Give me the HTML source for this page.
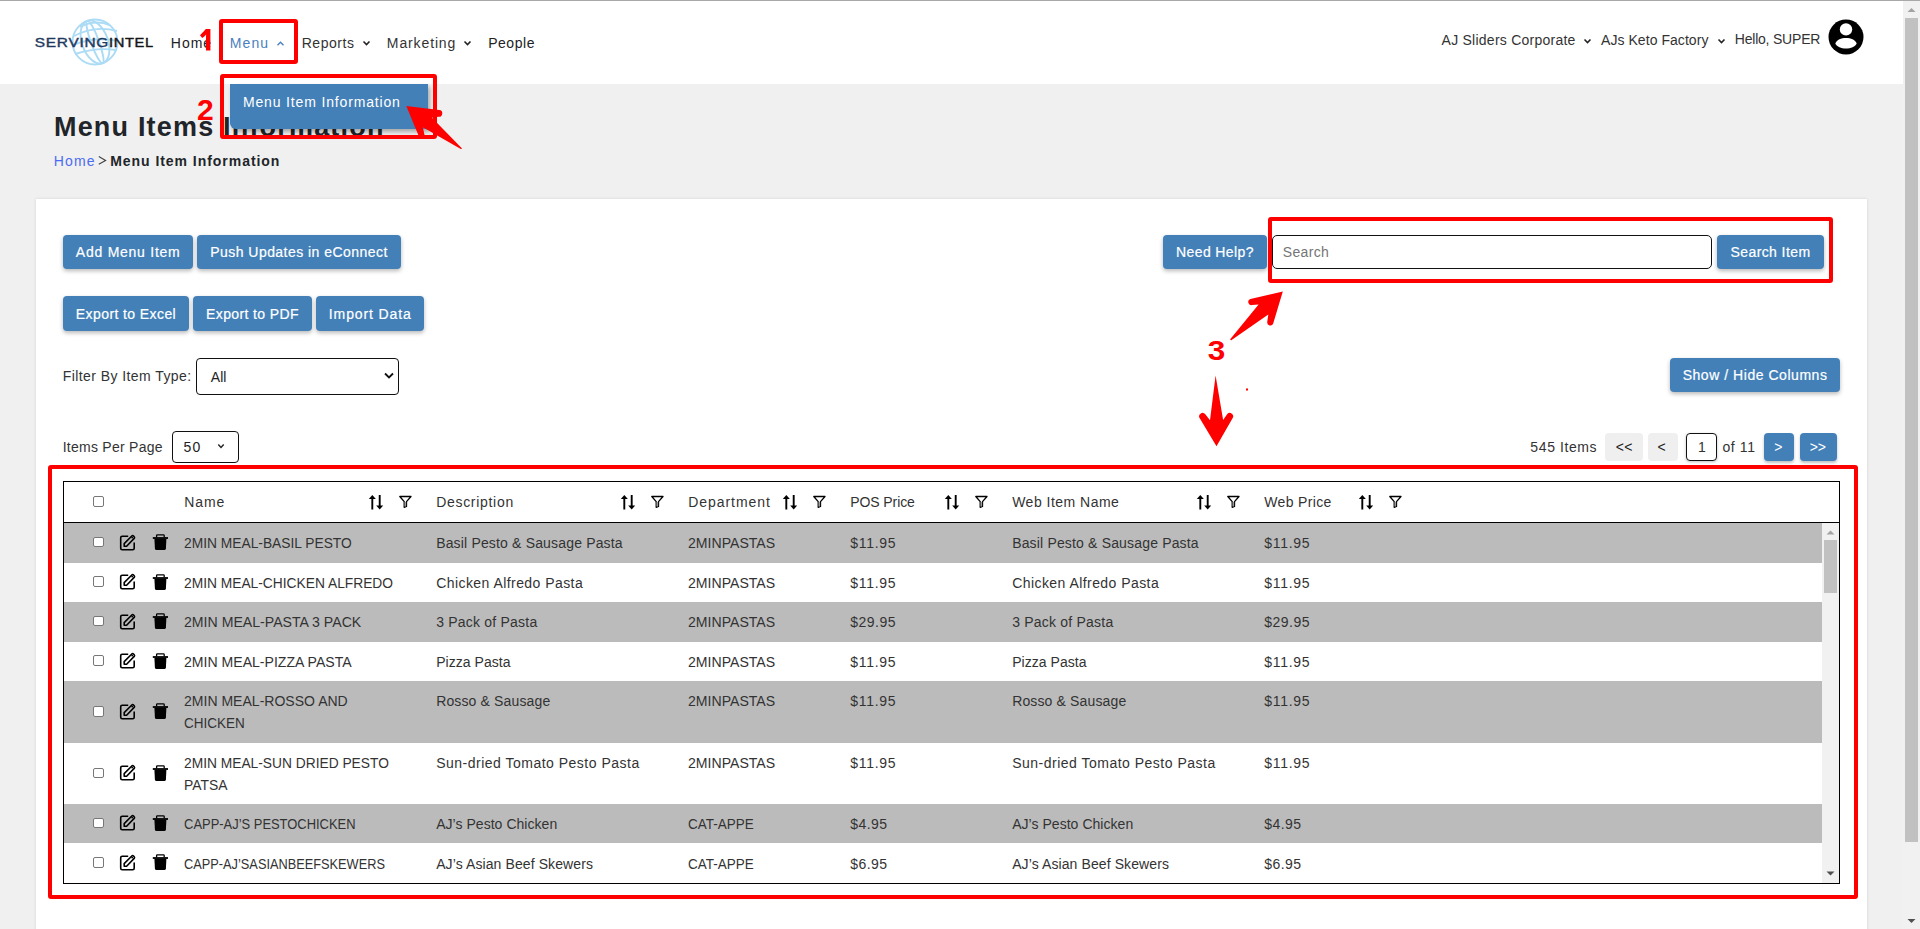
<!DOCTYPE html>
<html><head><meta charset="utf-8"><title>Menu Items Information</title>
<style>
html,body{margin:0;padding:0;width:1920px;height:929px;overflow:hidden;background:#f0f0f0;font-family:"Liberation Sans",sans-serif;}
.t{position:absolute;white-space:pre;font-family:"Liberation Sans",sans-serif;}
</style></head><body>
<div style="position:absolute;left:0px;top:1px;width:1903px;height:83px;background:#fff"></div>
<div style="position:absolute;left:0px;top:0px;width:1920px;height:1px;background:#a8a8a8"></div>
<div style="position:absolute;left:1903px;top:1px;width:17px;height:928px;background:#f1f1f1"></div>
<div style="position:absolute;left:1905px;top:18px;width:13px;height:824px;background:#c1c1c1"></div>
<svg style="position:absolute;left:1903px;top:1px" width="17" height="17"><path d="M4.5 11 L8.5 7 L12.5 11 Z" fill="#a3a3a3"/></svg>
<svg style="position:absolute;left:1903px;top:912px" width="17" height="17"><path d="M4.5 7 L8.5 11 L12.5 7 Z" fill="#505050"/></svg>
<svg style="position:absolute;left:70px;top:17px" width="50" height="50" viewBox="0 0 50 50">
<g fill="none" stroke="#acdbf5" stroke-width="1.9">
<circle cx="25" cy="25" r="22.5"/>
<ellipse cx="25" cy="25" rx="13" ry="22.5" transform="rotate(-20 25 25)"/>
<ellipse cx="25" cy="25" rx="4" ry="22.5" transform="rotate(-20 25 25)"/>
<path d="M4 19 Q25 8 47 14"/>
<path d="M3 28 Q25 19 48 24"/>
<path d="M5 37 Q27 30 46 33"/>
<path d="M10 10 Q25 2 40 8"/>
</g></svg>
<div class="t" style="left:35.22px;top:36.30px;font-size:13px;line-height:13px;font-weight:400;color:#1f3a60;letter-spacing:0.600px;-webkit-text-stroke:0.4px #1f3a60;transform:scaleX(1.1859);transform-origin:0.78px 0">SERVING</div>
<div class="t" style="left:109.22px;top:36.30px;font-size:13px;line-height:13px;font-weight:400;color:#151515;letter-spacing:0.600px;-webkit-text-stroke:0.4px #151515;transform:scaleX(1.1294);transform-origin:0.78px 0">INTEL</div>
<div class="t" style="left:170.86px;top:36.15px;font-size:14px;line-height:14px;font-weight:400;color:#222;letter-spacing:0.967px;">Home</div>
<div class="t" style="left:229.86px;top:36.15px;font-size:14px;line-height:14px;font-weight:400;color:#4a80c0;letter-spacing:1.076px;">Menu</div>
<svg style="position:absolute;left:276px;top:40px" width="9" height="7"><path d="M1.5 5.2 L4.5 2.2 L7.5 5.2" fill="none" stroke="#4a80c0" stroke-width="1.4"/></svg>
<div class="t" style="left:301.66px;top:36.15px;font-size:14px;line-height:14px;font-weight:400;color:#333;letter-spacing:0.555px;">Reports</div>
<svg style="position:absolute;left:362px;top:39px" width="9" height="8"><path d="M1.5 2.5 L4.5 5.5 L7.5 2.5" fill="none" stroke="#222" stroke-width="1.6"/></svg>
<div class="t" style="left:386.86px;top:36.15px;font-size:14px;line-height:14px;font-weight:400;color:#333;letter-spacing:0.874px;">Marketing</div>
<svg style="position:absolute;left:463px;top:39px" width="9" height="8"><path d="M1.5 2.5 L4.5 5.5 L7.5 2.5" fill="none" stroke="#222" stroke-width="1.6"/></svg>
<div class="t" style="left:488.16px;top:36.15px;font-size:14px;line-height:14px;font-weight:400;color:#222;letter-spacing:0.533px;">People</div>
<div class="t" style="left:1441.56px;top:33.15px;font-size:14px;line-height:14px;font-weight:400;color:#333;letter-spacing:0.247px;">AJ Sliders Corporate</div>
<svg style="position:absolute;left:1583px;top:37px" width="9" height="8"><path d="M1.5 2.5 L4.5 5.5 L7.5 2.5" fill="none" stroke="#222" stroke-width="1.6"/></svg>
<div class="t" style="left:1601.06px;top:33.15px;font-size:14px;line-height:14px;font-weight:400;color:#333;letter-spacing:0.051px;">AJs Keto Factory</div>
<svg style="position:absolute;left:1717px;top:37px" width="9" height="8"><path d="M1.5 2.5 L4.5 5.5 L7.5 2.5" fill="none" stroke="#222" stroke-width="1.6"/></svg>
<div class="t" style="left:1734.76px;top:31.90px;font-size:14px;line-height:14px;font-weight:400;color:#333;letter-spacing:-0.206px;">Hello, SUPER</div>
<svg style="position:absolute;left:1828px;top:19px" width="36" height="36" viewBox="0 0 36 36">
<circle cx="18" cy="18" r="17.5" fill="#000"/>
<circle cx="18" cy="10.4" r="6.2" fill="#fff"/>
<path d="M7.3 24.5 C9 20.5 13 19 18 19 C23 19 27 20.5 28.7 24.5 C27 28 23 29.5 18 29.5 C13 29.5 9 28 7.3 24.5Z" fill="#fff"/>
</svg>
<div class="t" style="left:53.98px;top:113.94px;font-size:27px;line-height:27px;font-weight:700;color:#212529;letter-spacing:1.186px;">Menu Items Information</div>
<div class="t" style="left:53.76px;top:153.85px;font-size:14px;line-height:14px;font-weight:400;color:#4b6cf0;letter-spacing:1.167px;">Home</div>
<svg style="position:absolute;left:0;top:0" width="120" height="180"><path d="M98.8 156.6 L105.6 160.4 L98.8 164.2" fill="none" stroke="#444" stroke-width="1.15"/></svg>
<div class="t" style="left:110.16px;top:153.85px;font-size:14px;line-height:14px;font-weight:700;color:#212529;letter-spacing:0.957px;">Menu Item Information</div>
<div style="position:absolute;left:36px;top:199px;width:1831px;height:760px;background:#fff;box-shadow:0 0 3px rgba(0,0,0,0.12)"></div>
<div style="position:absolute;left:63px;top:235px;width:130px;height:34px;background:#4380b8;border-radius:4px;box-shadow:0 2px 4px rgba(0,0,0,0.28)"></div>
<div class="t" style="left:75.86px;top:245.35px;font-size:14px;line-height:14px;font-weight:400;color:#fff;letter-spacing:0.744px;-webkit-text-stroke:0.2px #fff">Add Menu Item</div>
<div style="position:absolute;left:197px;top:235px;width:204px;height:34px;background:#4380b8;border-radius:4px;box-shadow:0 2px 4px rgba(0,0,0,0.28)"></div>
<div class="t" style="left:210.21px;top:245.35px;font-size:14px;line-height:14px;font-weight:400;color:#fff;letter-spacing:0.461px;-webkit-text-stroke:0.2px #fff">Push Updates in eConnect</div>
<div style="position:absolute;left:63px;top:296px;width:126px;height:34.5px;background:#4380b8;border-radius:4px;box-shadow:0 2px 4px rgba(0,0,0,0.28)"></div>
<div class="t" style="left:75.86px;top:307.15px;font-size:14px;line-height:14px;font-weight:400;color:#fff;letter-spacing:0.407px;-webkit-text-stroke:0.2px #fff">Export to Excel</div>
<div style="position:absolute;left:193px;top:296px;width:119px;height:34.5px;background:#4380b8;border-radius:4px;box-shadow:0 2px 4px rgba(0,0,0,0.28)"></div>
<div class="t" style="left:206.11px;top:307.15px;font-size:14px;line-height:14px;font-weight:400;color:#fff;letter-spacing:0.370px;-webkit-text-stroke:0.2px #fff">Export to PDF</div>
<div style="position:absolute;left:316px;top:296px;width:108px;height:34.5px;background:#4380b8;border-radius:4px;box-shadow:0 2px 4px rgba(0,0,0,0.28)"></div>
<div class="t" style="left:328.86px;top:307.15px;font-size:14px;line-height:14px;font-weight:400;color:#fff;letter-spacing:0.872px;-webkit-text-stroke:0.2px #fff">Import Data</div>
<div class="t" style="left:62.66px;top:368.85px;font-size:14px;line-height:14px;font-weight:400;color:#333;letter-spacing:0.432px;">Filter By Item Type:</div>
<div style="position:absolute;left:196px;top:358px;width:203px;height:37px;box-sizing:border-box;border:1px solid #111;border-radius:4px;background:#fff"></div>
<div class="t" style="left:210.86px;top:370.15px;font-size:14px;line-height:14px;font-weight:400;color:#222;letter-spacing:0.000px;">All</div>
<svg style="position:absolute;left:383px;top:371px" width="12" height="10"><path d="M2 2.5 L6 6.5 L10 2.5" fill="none" stroke="#111" stroke-width="1.8"/></svg>
<div class="t" style="left:62.66px;top:439.95px;font-size:14px;line-height:14px;font-weight:400;color:#333;letter-spacing:0.258px;">Items Per Page</div>
<div style="position:absolute;left:172px;top:431px;width:67px;height:31.5px;box-sizing:border-box;border:1px solid #111;border-radius:4px;background:#fff"></div>
<div class="t" style="left:183.56px;top:439.95px;font-size:14px;line-height:14px;font-weight:400;color:#222;letter-spacing:1.182px;">50</div>
<svg style="position:absolute;left:217px;top:443px" width="8" height="7"><path d="M1.3 1.5 L4 4.5 L6.7 1.5" fill="none" stroke="#222" stroke-width="1.4"/></svg>
<div style="position:absolute;left:1163px;top:235px;width:104px;height:34px;background:#4380b8;border-radius:4px;box-shadow:0 2px 4px rgba(0,0,0,0.28)"></div>
<div class="t" style="left:1176.06px;top:245.05px;font-size:14px;line-height:14px;font-weight:400;color:#fff;letter-spacing:0.391px;-webkit-text-stroke:0.2px #fff">Need Help?</div>
<div style="position:absolute;left:1272px;top:235px;width:440px;height:34px;box-sizing:border-box;border:1px solid #111;border-radius:5px;background:#fff"></div>
<div class="t" style="left:1282.86px;top:245.05px;font-size:14px;line-height:14px;font-weight:400;color:#757575;letter-spacing:0.300px;">Search</div>
<div style="position:absolute;left:1717px;top:235px;width:107px;height:34px;background:#4380b8;border-radius:4px;box-shadow:0 2px 4px rgba(0,0,0,0.28)"></div>
<div class="t" style="left:1730.51px;top:245.05px;font-size:14px;line-height:14px;font-weight:400;color:#fff;letter-spacing:0.408px;-webkit-text-stroke:0.2px #fff">Search Item</div>
<div style="position:absolute;left:1670px;top:358px;width:170px;height:34px;background:#4380b8;border-radius:4px;box-shadow:0 2px 4px rgba(0,0,0,0.28)"></div>
<div class="t" style="left:1682.66px;top:368.35px;font-size:14px;line-height:14px;font-weight:400;color:#fff;letter-spacing:0.535px;-webkit-text-stroke:0.2px #fff">Show / Hide Columns</div>
<div class="t" style="left:1530.36px;top:440.15px;font-size:14px;line-height:14px;font-weight:400;color:#333;letter-spacing:0.597px;">545 Items</div>
<div style="position:absolute;left:1605px;top:433px;width:38px;height:28px;background:#efefef;border-radius:4px"></div>
<div class="t" style="left:1615.76px;top:440.15px;font-size:14px;line-height:14px;font-weight:400;color:#222;letter-spacing:0.401px;">&lt;&lt;</div>
<div style="position:absolute;left:1648px;top:433px;width:30px;height:28px;background:#efefef;border-radius:4px"></div>
<div class="t" style="left:1657.56px;top:440.15px;font-size:14px;line-height:14px;font-weight:400;color:#222;letter-spacing:0.000px;">&lt;</div>
<div style="position:absolute;left:1686px;top:433px;width:31px;height:28px;box-sizing:border-box;border:1px solid #111;border-radius:4px;background:#fff;box-shadow:0 1px 3px rgba(0,0,0,0.25)"></div>
<div class="t" style="left:1697.96px;top:440.15px;font-size:14px;line-height:14px;font-weight:400;color:#333;letter-spacing:0.000px;">1</div>
<div class="t" style="left:1722.46px;top:440.15px;font-size:14px;line-height:14px;font-weight:400;color:#333;letter-spacing:0.613px;">of 11</div>
<div style="position:absolute;left:1764px;top:433px;width:30px;height:28px;background:#4380b8;border-radius:4px;box-shadow:0 2px 3px rgba(0,0,0,0.25)"></div>
<div class="t" style="left:1774.36px;top:440.15px;font-size:14px;line-height:14px;font-weight:400;color:#fff;letter-spacing:0.000px;">&gt;</div>
<div style="position:absolute;left:1800px;top:433px;width:37px;height:28px;background:#4380b8;border-radius:4px;box-shadow:0 2px 3px rgba(0,0,0,0.25)"></div>
<div class="t" style="left:1809.66px;top:440.15px;font-size:14px;line-height:14px;font-weight:400;color:#fff;letter-spacing:0.001px;">&gt;&gt;</div>
<div style="position:absolute;left:63px;top:481px;width:1777px;height:403px;box-sizing:border-box;border:1px solid #000;background:#fff"></div>
<div style="position:absolute;left:64px;top:522px;width:1776px;height:1px;background:#000"></div>
<div style="position:absolute;left:93px;top:496.3px;width:10.5px;height:10.5px;box-sizing:border-box;border:1px solid #777;border-radius:2px;background:#fff"></div>
<div class="t" style="left:184.16px;top:494.85px;font-size:14px;line-height:14px;font-weight:400;color:#333;letter-spacing:0.967px;">Name</div>
<svg style="position:absolute;left:368px;top:494px" width="16" height="17" viewBox="0 0 16 17"><g stroke="#000" stroke-width="1.9" fill="none"><path d="M4.3 4 V15.5"/><path d="M11.7 1 V12"/></g><path d="M0.8 5 L4.3 1 L7.8 5Z" fill="#000"/><path d="M8.2 11.5 L11.7 15.5 L15.2 11.5Z" fill="#000"/></svg>
<svg style="position:absolute;left:399px;top:495px" width="13" height="13" viewBox="0 0 13 13"><path d="M0.8 1.5 H12 L7.5 6.6 V11.5 L5.2 12.3 V6.6 Z" fill="#fff" stroke="#000" stroke-width="1.3" stroke-linejoin="round"/><path d="M5.6 7 H7.1 V11 L5.6 11.6Z" fill="#999"/></svg>
<div class="t" style="left:436.16px;top:494.85px;font-size:14px;line-height:14px;font-weight:400;color:#333;letter-spacing:0.703px;">Description</div>
<svg style="position:absolute;left:620px;top:494px" width="16" height="17" viewBox="0 0 16 17"><g stroke="#000" stroke-width="1.9" fill="none"><path d="M4.3 4 V15.5"/><path d="M11.7 1 V12"/></g><path d="M0.8 5 L4.3 1 L7.8 5Z" fill="#000"/><path d="M8.2 11.5 L11.7 15.5 L15.2 11.5Z" fill="#000"/></svg>
<svg style="position:absolute;left:651px;top:495px" width="13" height="13" viewBox="0 0 13 13"><path d="M0.8 1.5 H12 L7.5 6.6 V11.5 L5.2 12.3 V6.6 Z" fill="#fff" stroke="#000" stroke-width="1.3" stroke-linejoin="round"/><path d="M5.6 7 H7.1 V11 L5.6 11.6Z" fill="#999"/></svg>
<div class="t" style="left:688.16px;top:494.85px;font-size:14px;line-height:14px;font-weight:400;color:#333;letter-spacing:0.967px;">Department</div>
<svg style="position:absolute;left:782px;top:494px" width="16" height="17" viewBox="0 0 16 17"><g stroke="#000" stroke-width="1.9" fill="none"><path d="M4.3 4 V15.5"/><path d="M11.7 1 V12"/></g><path d="M0.8 5 L4.3 1 L7.8 5Z" fill="#000"/><path d="M8.2 11.5 L11.7 15.5 L15.2 11.5Z" fill="#000"/></svg>
<svg style="position:absolute;left:813px;top:495px" width="13" height="13" viewBox="0 0 13 13"><path d="M0.8 1.5 H12 L7.5 6.6 V11.5 L5.2 12.3 V6.6 Z" fill="#fff" stroke="#000" stroke-width="1.3" stroke-linejoin="round"/><path d="M5.6 7 H7.1 V11 L5.6 11.6Z" fill="#999"/></svg>
<div class="t" style="left:850.16px;top:494.85px;font-size:14px;line-height:14px;font-weight:400;color:#333;letter-spacing:-0.075px;">POS Price</div>
<svg style="position:absolute;left:944px;top:494px" width="16" height="17" viewBox="0 0 16 17"><g stroke="#000" stroke-width="1.9" fill="none"><path d="M4.3 4 V15.5"/><path d="M11.7 1 V12"/></g><path d="M0.8 5 L4.3 1 L7.8 5Z" fill="#000"/><path d="M8.2 11.5 L11.7 15.5 L15.2 11.5Z" fill="#000"/></svg>
<svg style="position:absolute;left:975px;top:495px" width="13" height="13" viewBox="0 0 13 13"><path d="M0.8 1.5 H12 L7.5 6.6 V11.5 L5.2 12.3 V6.6 Z" fill="#fff" stroke="#000" stroke-width="1.3" stroke-linejoin="round"/><path d="M5.6 7 H7.1 V11 L5.6 11.6Z" fill="#999"/></svg>
<div class="t" style="left:1012.16px;top:494.85px;font-size:14px;line-height:14px;font-weight:400;color:#333;letter-spacing:0.489px;">Web Item Name</div>
<svg style="position:absolute;left:1196px;top:494px" width="16" height="17" viewBox="0 0 16 17"><g stroke="#000" stroke-width="1.9" fill="none"><path d="M4.3 4 V15.5"/><path d="M11.7 1 V12"/></g><path d="M0.8 5 L4.3 1 L7.8 5Z" fill="#000"/><path d="M8.2 11.5 L11.7 15.5 L15.2 11.5Z" fill="#000"/></svg>
<svg style="position:absolute;left:1227px;top:495px" width="13" height="13" viewBox="0 0 13 13"><path d="M0.8 1.5 H12 L7.5 6.6 V11.5 L5.2 12.3 V6.6 Z" fill="#fff" stroke="#000" stroke-width="1.3" stroke-linejoin="round"/><path d="M5.6 7 H7.1 V11 L5.6 11.6Z" fill="#999"/></svg>
<div class="t" style="left:1264.16px;top:494.85px;font-size:14px;line-height:14px;font-weight:400;color:#333;letter-spacing:0.366px;">Web Price</div>
<svg style="position:absolute;left:1358px;top:494px" width="16" height="17" viewBox="0 0 16 17"><g stroke="#000" stroke-width="1.9" fill="none"><path d="M4.3 4 V15.5"/><path d="M11.7 1 V12"/></g><path d="M0.8 5 L4.3 1 L7.8 5Z" fill="#000"/><path d="M8.2 11.5 L11.7 15.5 L15.2 11.5Z" fill="#000"/></svg>
<svg style="position:absolute;left:1389px;top:495px" width="13" height="13" viewBox="0 0 13 13"><path d="M0.8 1.5 H12 L7.5 6.6 V11.5 L5.2 12.3 V6.6 Z" fill="#fff" stroke="#000" stroke-width="1.3" stroke-linejoin="round"/><path d="M5.6 7 H7.1 V11 L5.6 11.6Z" fill="#999"/></svg>
<div style="position:absolute;left:64px;top:523px;width:1758px;height:39.5px;background:#bbbbbb"></div>
<div style="position:absolute;left:93px;top:536.75px;width:10.5px;height:10.5px;box-sizing:border-box;border:1px solid #777;border-radius:2px;background:#fff"></div>
<svg style="position:absolute;left:119px;top:533.5px" width="17" height="17" viewBox="0 0 17 17"><path d="M9.2 2.2 H3.2 Q1.7 2.2 1.7 3.7 V14.2 Q1.7 15.7 3.2 15.7 H13.7 Q15.2 15.7 15.2 14.2 V8.4" fill="none" stroke="#000" stroke-width="1.6"/><path d="M5.2 12.3 V9.6 L12.8 2 A1.2 1.2 0 0 1 14.5 2 L15.2 2.7 A1.2 1.2 0 0 1 15.2 4.4 L7.6 12.3 Z" fill="none" stroke="#000" stroke-width="1.6" stroke-linejoin="round"/><circle cx="13.2" cy="3.6" r="0.9" fill="#000"/></svg>
<svg style="position:absolute;left:152px;top:534.0px" width="17" height="18" viewBox="0 0 17 18"><path d="M4.6 3.2 V1.6 Q4.6 0.9 5.4 0.9 H11.4 Q12.2 0.9 12.2 1.6 V3.2" fill="none" stroke="#000" stroke-width="1.3"/><path d="M0.8 3.1 H16 V4.9 H0.8Z" fill="#000"/><path d="M2.4 4.6 H14.4 L13.9 14.5 Q13.8 16 12.3 16 H4.5 Q3 16 2.9 14.5Z" fill="#000"/></svg>
<div class="t" style="left:184.16px;top:536.35px;font-size:14px;line-height:14px;font-weight:400;color:#333;letter-spacing:0.000px;;transform:scaleX(0.9844);transform-origin:0.84px 0">2MIN MEAL-BASIL PESTO</div>
<div class="t" style="left:436.16px;top:536.35px;font-size:14px;line-height:14px;font-weight:400;color:#333;letter-spacing:0.167px;">Basil Pesto &amp; Sausage Pasta</div>
<div class="t" style="left:688.16px;top:536.35px;font-size:14px;line-height:14px;font-weight:400;color:#333;letter-spacing:0.000px;;transform:scaleX(1.0063);transform-origin:0.84px 0">2MINPASTAS</div>
<div class="t" style="left:850.16px;top:536.35px;font-size:14px;line-height:14px;font-weight:400;color:#333;letter-spacing:0.736px;">$11.95</div>
<div class="t" style="left:1012.16px;top:536.35px;font-size:14px;line-height:14px;font-weight:400;color:#333;letter-spacing:0.167px;">Basil Pesto &amp; Sausage Pasta</div>
<div class="t" style="left:1264.16px;top:536.35px;font-size:14px;line-height:14px;font-weight:400;color:#333;letter-spacing:0.736px;">$11.95</div>
<div style="position:absolute;left:93px;top:576.25px;width:10.5px;height:10.5px;box-sizing:border-box;border:1px solid #777;border-radius:2px;background:#fff"></div>
<svg style="position:absolute;left:119px;top:573.0px" width="17" height="17" viewBox="0 0 17 17"><path d="M9.2 2.2 H3.2 Q1.7 2.2 1.7 3.7 V14.2 Q1.7 15.7 3.2 15.7 H13.7 Q15.2 15.7 15.2 14.2 V8.4" fill="none" stroke="#000" stroke-width="1.6"/><path d="M5.2 12.3 V9.6 L12.8 2 A1.2 1.2 0 0 1 14.5 2 L15.2 2.7 A1.2 1.2 0 0 1 15.2 4.4 L7.6 12.3 Z" fill="none" stroke="#000" stroke-width="1.6" stroke-linejoin="round"/><circle cx="13.2" cy="3.6" r="0.9" fill="#000"/></svg>
<svg style="position:absolute;left:152px;top:573.5px" width="17" height="18" viewBox="0 0 17 18"><path d="M4.6 3.2 V1.6 Q4.6 0.9 5.4 0.9 H11.4 Q12.2 0.9 12.2 1.6 V3.2" fill="none" stroke="#000" stroke-width="1.3"/><path d="M0.8 3.1 H16 V4.9 H0.8Z" fill="#000"/><path d="M2.4 4.6 H14.4 L13.9 14.5 Q13.8 16 12.3 16 H4.5 Q3 16 2.9 14.5Z" fill="#000"/></svg>
<div class="t" style="left:184.16px;top:575.95px;font-size:14px;line-height:14px;font-weight:400;color:#333;letter-spacing:0.000px;;transform:scaleX(0.9841);transform-origin:0.84px 0">2MIN MEAL-CHICKEN ALFREDO</div>
<div class="t" style="left:436.16px;top:575.95px;font-size:14px;line-height:14px;font-weight:400;color:#333;letter-spacing:0.441px;">Chicken Alfredo Pasta</div>
<div class="t" style="left:688.16px;top:575.95px;font-size:14px;line-height:14px;font-weight:400;color:#333;letter-spacing:0.000px;;transform:scaleX(1.0063);transform-origin:0.84px 0">2MINPASTAS</div>
<div class="t" style="left:850.16px;top:575.95px;font-size:14px;line-height:14px;font-weight:400;color:#333;letter-spacing:0.736px;">$11.95</div>
<div class="t" style="left:1012.16px;top:575.95px;font-size:14px;line-height:14px;font-weight:400;color:#333;letter-spacing:0.441px;">Chicken Alfredo Pasta</div>
<div class="t" style="left:1264.16px;top:575.95px;font-size:14px;line-height:14px;font-weight:400;color:#333;letter-spacing:0.736px;">$11.95</div>
<div style="position:absolute;left:64px;top:602px;width:1758px;height:39.5px;background:#bbbbbb"></div>
<div style="position:absolute;left:93px;top:615.75px;width:10.5px;height:10.5px;box-sizing:border-box;border:1px solid #777;border-radius:2px;background:#fff"></div>
<svg style="position:absolute;left:119px;top:612.5px" width="17" height="17" viewBox="0 0 17 17"><path d="M9.2 2.2 H3.2 Q1.7 2.2 1.7 3.7 V14.2 Q1.7 15.7 3.2 15.7 H13.7 Q15.2 15.7 15.2 14.2 V8.4" fill="none" stroke="#000" stroke-width="1.6"/><path d="M5.2 12.3 V9.6 L12.8 2 A1.2 1.2 0 0 1 14.5 2 L15.2 2.7 A1.2 1.2 0 0 1 15.2 4.4 L7.6 12.3 Z" fill="none" stroke="#000" stroke-width="1.6" stroke-linejoin="round"/><circle cx="13.2" cy="3.6" r="0.9" fill="#000"/></svg>
<svg style="position:absolute;left:152px;top:613.0px" width="17" height="18" viewBox="0 0 17 18"><path d="M4.6 3.2 V1.6 Q4.6 0.9 5.4 0.9 H11.4 Q12.2 0.9 12.2 1.6 V3.2" fill="none" stroke="#000" stroke-width="1.3"/><path d="M0.8 3.1 H16 V4.9 H0.8Z" fill="#000"/><path d="M2.4 4.6 H14.4 L13.9 14.5 Q13.8 16 12.3 16 H4.5 Q3 16 2.9 14.5Z" fill="#000"/></svg>
<div class="t" style="left:184.16px;top:615.45px;font-size:14px;line-height:14px;font-weight:400;color:#333;letter-spacing:0.000px;;transform:scaleX(1.0082);transform-origin:0.84px 0">2MIN MEAL-PASTA 3 PACK</div>
<div class="t" style="left:436.16px;top:615.45px;font-size:14px;line-height:14px;font-weight:400;color:#333;letter-spacing:0.214px;">3 Pack of Pasta</div>
<div class="t" style="left:688.16px;top:615.45px;font-size:14px;line-height:14px;font-weight:400;color:#333;letter-spacing:0.000px;;transform:scaleX(1.0063);transform-origin:0.84px 0">2MINPASTAS</div>
<div class="t" style="left:850.16px;top:615.45px;font-size:14px;line-height:14px;font-weight:400;color:#333;letter-spacing:0.526px;">$29.95</div>
<div class="t" style="left:1012.16px;top:615.45px;font-size:14px;line-height:14px;font-weight:400;color:#333;letter-spacing:0.214px;">3 Pack of Pasta</div>
<div class="t" style="left:1264.16px;top:615.45px;font-size:14px;line-height:14px;font-weight:400;color:#333;letter-spacing:0.526px;">$29.95</div>
<div style="position:absolute;left:93px;top:655.25px;width:10.5px;height:10.5px;box-sizing:border-box;border:1px solid #777;border-radius:2px;background:#fff"></div>
<svg style="position:absolute;left:119px;top:652.0px" width="17" height="17" viewBox="0 0 17 17"><path d="M9.2 2.2 H3.2 Q1.7 2.2 1.7 3.7 V14.2 Q1.7 15.7 3.2 15.7 H13.7 Q15.2 15.7 15.2 14.2 V8.4" fill="none" stroke="#000" stroke-width="1.6"/><path d="M5.2 12.3 V9.6 L12.8 2 A1.2 1.2 0 0 1 14.5 2 L15.2 2.7 A1.2 1.2 0 0 1 15.2 4.4 L7.6 12.3 Z" fill="none" stroke="#000" stroke-width="1.6" stroke-linejoin="round"/><circle cx="13.2" cy="3.6" r="0.9" fill="#000"/></svg>
<svg style="position:absolute;left:152px;top:652.5px" width="17" height="18" viewBox="0 0 17 18"><path d="M4.6 3.2 V1.6 Q4.6 0.9 5.4 0.9 H11.4 Q12.2 0.9 12.2 1.6 V3.2" fill="none" stroke="#000" stroke-width="1.3"/><path d="M0.8 3.1 H16 V4.9 H0.8Z" fill="#000"/><path d="M2.4 4.6 H14.4 L13.9 14.5 Q13.8 16 12.3 16 H4.5 Q3 16 2.9 14.5Z" fill="#000"/></svg>
<div class="t" style="left:184.16px;top:655.05px;font-size:14px;line-height:14px;font-weight:400;color:#333;letter-spacing:0.000px;;transform:scaleX(1.0055);transform-origin:0.84px 0">2MIN MEAL-PIZZA PASTA</div>
<div class="t" style="left:436.16px;top:655.05px;font-size:14px;line-height:14px;font-weight:400;color:#333;letter-spacing:0.052px;">Pizza Pasta</div>
<div class="t" style="left:688.16px;top:655.05px;font-size:14px;line-height:14px;font-weight:400;color:#333;letter-spacing:0.000px;;transform:scaleX(1.0063);transform-origin:0.84px 0">2MINPASTAS</div>
<div class="t" style="left:850.16px;top:655.05px;font-size:14px;line-height:14px;font-weight:400;color:#333;letter-spacing:0.736px;">$11.95</div>
<div class="t" style="left:1012.16px;top:655.05px;font-size:14px;line-height:14px;font-weight:400;color:#333;letter-spacing:0.052px;">Pizza Pasta</div>
<div class="t" style="left:1264.16px;top:655.05px;font-size:14px;line-height:14px;font-weight:400;color:#333;letter-spacing:0.736px;">$11.95</div>
<div style="position:absolute;left:64px;top:681px;width:1758px;height:62px;background:#bbbbbb"></div>
<div style="position:absolute;left:93px;top:706.0px;width:10.5px;height:10.5px;box-sizing:border-box;border:1px solid #777;border-radius:2px;background:#fff"></div>
<svg style="position:absolute;left:119px;top:702.8px" width="17" height="17" viewBox="0 0 17 17"><path d="M9.2 2.2 H3.2 Q1.7 2.2 1.7 3.7 V14.2 Q1.7 15.7 3.2 15.7 H13.7 Q15.2 15.7 15.2 14.2 V8.4" fill="none" stroke="#000" stroke-width="1.6"/><path d="M5.2 12.3 V9.6 L12.8 2 A1.2 1.2 0 0 1 14.5 2 L15.2 2.7 A1.2 1.2 0 0 1 15.2 4.4 L7.6 12.3 Z" fill="none" stroke="#000" stroke-width="1.6" stroke-linejoin="round"/><circle cx="13.2" cy="3.6" r="0.9" fill="#000"/></svg>
<svg style="position:absolute;left:152px;top:703.2px" width="17" height="18" viewBox="0 0 17 18"><path d="M4.6 3.2 V1.6 Q4.6 0.9 5.4 0.9 H11.4 Q12.2 0.9 12.2 1.6 V3.2" fill="none" stroke="#000" stroke-width="1.3"/><path d="M0.8 3.1 H16 V4.9 H0.8Z" fill="#000"/><path d="M2.4 4.6 H14.4 L13.9 14.5 Q13.8 16 12.3 16 H4.5 Q3 16 2.9 14.5Z" fill="#000"/></svg>
<div class="t" style="left:184.16px;top:694.25px;font-size:14px;line-height:14px;font-weight:400;color:#333;letter-spacing:0.000px;;transform:scaleX(1.0024);transform-origin:0.84px 0">2MIN MEAL-ROSSO AND</div>
<div class="t" style="left:184.16px;top:716.45px;font-size:14px;line-height:14px;font-weight:400;color:#333;letter-spacing:0.000px;;transform:scaleX(0.9651);transform-origin:0.84px 0">CHICKEN</div>
<div class="t" style="left:436.16px;top:694.25px;font-size:14px;line-height:14px;font-weight:400;color:#333;letter-spacing:0.142px;">Rosso &amp; Sausage</div>
<div class="t" style="left:688.16px;top:694.25px;font-size:14px;line-height:14px;font-weight:400;color:#333;letter-spacing:0.000px;;transform:scaleX(1.0063);transform-origin:0.84px 0">2MINPASTAS</div>
<div class="t" style="left:850.16px;top:694.25px;font-size:14px;line-height:14px;font-weight:400;color:#333;letter-spacing:0.736px;">$11.95</div>
<div class="t" style="left:1012.16px;top:694.25px;font-size:14px;line-height:14px;font-weight:400;color:#333;letter-spacing:0.142px;">Rosso &amp; Sausage</div>
<div class="t" style="left:1264.16px;top:694.25px;font-size:14px;line-height:14px;font-weight:400;color:#333;letter-spacing:0.736px;">$11.95</div>
<div style="position:absolute;left:93px;top:767.5px;width:10.5px;height:10.5px;box-sizing:border-box;border:1px solid #777;border-radius:2px;background:#fff"></div>
<svg style="position:absolute;left:119px;top:764.3px" width="17" height="17" viewBox="0 0 17 17"><path d="M9.2 2.2 H3.2 Q1.7 2.2 1.7 3.7 V14.2 Q1.7 15.7 3.2 15.7 H13.7 Q15.2 15.7 15.2 14.2 V8.4" fill="none" stroke="#000" stroke-width="1.6"/><path d="M5.2 12.3 V9.6 L12.8 2 A1.2 1.2 0 0 1 14.5 2 L15.2 2.7 A1.2 1.2 0 0 1 15.2 4.4 L7.6 12.3 Z" fill="none" stroke="#000" stroke-width="1.6" stroke-linejoin="round"/><circle cx="13.2" cy="3.6" r="0.9" fill="#000"/></svg>
<svg style="position:absolute;left:152px;top:764.7px" width="17" height="18" viewBox="0 0 17 18"><path d="M4.6 3.2 V1.6 Q4.6 0.9 5.4 0.9 H11.4 Q12.2 0.9 12.2 1.6 V3.2" fill="none" stroke="#000" stroke-width="1.3"/><path d="M0.8 3.1 H16 V4.9 H0.8Z" fill="#000"/><path d="M2.4 4.6 H14.4 L13.9 14.5 Q13.8 16 12.3 16 H4.5 Q3 16 2.9 14.5Z" fill="#000"/></svg>
<div class="t" style="left:184.16px;top:756.25px;font-size:14px;line-height:14px;font-weight:400;color:#333;letter-spacing:0.000px;;transform:scaleX(0.9837);transform-origin:0.84px 0">2MIN MEAL-SUN DRIED PESTO</div>
<div class="t" style="left:184.16px;top:777.65px;font-size:14px;line-height:14px;font-weight:400;color:#333;letter-spacing:0.000px;;transform:scaleX(0.9914);transform-origin:0.84px 0">PATSA</div>
<div class="t" style="left:436.16px;top:756.25px;font-size:14px;line-height:14px;font-weight:400;color:#333;letter-spacing:0.497px;">Sun-dried Tomato Pesto Pasta</div>
<div class="t" style="left:688.16px;top:756.25px;font-size:14px;line-height:14px;font-weight:400;color:#333;letter-spacing:0.000px;;transform:scaleX(1.0063);transform-origin:0.84px 0">2MINPASTAS</div>
<div class="t" style="left:850.16px;top:756.25px;font-size:14px;line-height:14px;font-weight:400;color:#333;letter-spacing:0.736px;">$11.95</div>
<div class="t" style="left:1012.16px;top:756.25px;font-size:14px;line-height:14px;font-weight:400;color:#333;letter-spacing:0.497px;">Sun-dried Tomato Pesto Pasta</div>
<div class="t" style="left:1264.16px;top:756.25px;font-size:14px;line-height:14px;font-weight:400;color:#333;letter-spacing:0.736px;">$11.95</div>
<div style="position:absolute;left:64px;top:804px;width:1758px;height:39px;background:#bbbbbb"></div>
<div style="position:absolute;left:93px;top:817.5px;width:10.5px;height:10.5px;box-sizing:border-box;border:1px solid #777;border-radius:2px;background:#fff"></div>
<svg style="position:absolute;left:119px;top:814.3px" width="17" height="17" viewBox="0 0 17 17"><path d="M9.2 2.2 H3.2 Q1.7 2.2 1.7 3.7 V14.2 Q1.7 15.7 3.2 15.7 H13.7 Q15.2 15.7 15.2 14.2 V8.4" fill="none" stroke="#000" stroke-width="1.6"/><path d="M5.2 12.3 V9.6 L12.8 2 A1.2 1.2 0 0 1 14.5 2 L15.2 2.7 A1.2 1.2 0 0 1 15.2 4.4 L7.6 12.3 Z" fill="none" stroke="#000" stroke-width="1.6" stroke-linejoin="round"/><circle cx="13.2" cy="3.6" r="0.9" fill="#000"/></svg>
<svg style="position:absolute;left:152px;top:814.7px" width="17" height="18" viewBox="0 0 17 18"><path d="M4.6 3.2 V1.6 Q4.6 0.9 5.4 0.9 H11.4 Q12.2 0.9 12.2 1.6 V3.2" fill="none" stroke="#000" stroke-width="1.3"/><path d="M0.8 3.1 H16 V4.9 H0.8Z" fill="#000"/><path d="M2.4 4.6 H14.4 L13.9 14.5 Q13.8 16 12.3 16 H4.5 Q3 16 2.9 14.5Z" fill="#000"/></svg>
<div class="t" style="left:184.16px;top:817.45px;font-size:14px;line-height:14px;font-weight:400;color:#333;letter-spacing:0.000px;;transform:scaleX(0.9235);transform-origin:0.84px 0">CAPP-AJ’S PESTOCHICKEN</div>
<div class="t" style="left:436.16px;top:817.45px;font-size:14px;line-height:14px;font-weight:400;color:#333;letter-spacing:0.041px;">AJ’s Pesto Chicken</div>
<div class="t" style="left:688.16px;top:817.45px;font-size:14px;line-height:14px;font-weight:400;color:#333;letter-spacing:0.000px;;transform:scaleX(0.9620);transform-origin:0.84px 0">CAT-APPE</div>
<div class="t" style="left:850.16px;top:817.45px;font-size:14px;line-height:14px;font-weight:400;color:#333;letter-spacing:0.478px;">$4.95</div>
<div class="t" style="left:1012.16px;top:817.45px;font-size:14px;line-height:14px;font-weight:400;color:#333;letter-spacing:0.041px;">AJ’s Pesto Chicken</div>
<div class="t" style="left:1264.16px;top:817.45px;font-size:14px;line-height:14px;font-weight:400;color:#333;letter-spacing:0.478px;">$4.95</div>
<div style="position:absolute;left:93px;top:857.0px;width:10.5px;height:10.5px;box-sizing:border-box;border:1px solid #777;border-radius:2px;background:#fff"></div>
<svg style="position:absolute;left:119px;top:853.8px" width="17" height="17" viewBox="0 0 17 17"><path d="M9.2 2.2 H3.2 Q1.7 2.2 1.7 3.7 V14.2 Q1.7 15.7 3.2 15.7 H13.7 Q15.2 15.7 15.2 14.2 V8.4" fill="none" stroke="#000" stroke-width="1.6"/><path d="M5.2 12.3 V9.6 L12.8 2 A1.2 1.2 0 0 1 14.5 2 L15.2 2.7 A1.2 1.2 0 0 1 15.2 4.4 L7.6 12.3 Z" fill="none" stroke="#000" stroke-width="1.6" stroke-linejoin="round"/><circle cx="13.2" cy="3.6" r="0.9" fill="#000"/></svg>
<svg style="position:absolute;left:152px;top:854.2px" width="17" height="18" viewBox="0 0 17 18"><path d="M4.6 3.2 V1.6 Q4.6 0.9 5.4 0.9 H11.4 Q12.2 0.9 12.2 1.6 V3.2" fill="none" stroke="#000" stroke-width="1.3"/><path d="M0.8 3.1 H16 V4.9 H0.8Z" fill="#000"/><path d="M2.4 4.6 H14.4 L13.9 14.5 Q13.8 16 12.3 16 H4.5 Q3 16 2.9 14.5Z" fill="#000"/></svg>
<div class="t" style="left:184.16px;top:856.55px;font-size:14px;line-height:14px;font-weight:400;color:#333;letter-spacing:0.000px;;transform:scaleX(0.9122);transform-origin:0.84px 0">CAPP-AJ’SASIANBEEFSKEWERS</div>
<div class="t" style="left:436.16px;top:856.55px;font-size:14px;line-height:14px;font-weight:400;color:#333;letter-spacing:0.098px;">AJ’s Asian Beef Skewers</div>
<div class="t" style="left:688.16px;top:856.55px;font-size:14px;line-height:14px;font-weight:400;color:#333;letter-spacing:0.000px;;transform:scaleX(0.9620);transform-origin:0.84px 0">CAT-APPE</div>
<div class="t" style="left:850.16px;top:856.55px;font-size:14px;line-height:14px;font-weight:400;color:#333;letter-spacing:0.478px;">$6.95</div>
<div class="t" style="left:1012.16px;top:856.55px;font-size:14px;line-height:14px;font-weight:400;color:#333;letter-spacing:0.098px;">AJ’s Asian Beef Skewers</div>
<div class="t" style="left:1264.16px;top:856.55px;font-size:14px;line-height:14px;font-weight:400;color:#333;letter-spacing:0.478px;">$6.95</div>
<div style="position:absolute;left:1822px;top:523px;width:17px;height:360px;background:#f1f1f1"></div>
<div style="position:absolute;left:1824px;top:540px;width:13px;height:53px;background:#c1c1c1"></div>
<svg style="position:absolute;left:1822px;top:524px" width="17" height="15"><path d="M4.5 10.5 L8.5 6.5 L12.5 10.5 Z" fill="#a3a3a3"/></svg>
<svg style="position:absolute;left:1822px;top:866px" width="17" height="15"><path d="M4.5 5.5 L8.5 9.5 L12.5 5.5 Z" fill="#505050"/></svg>
<div style="position:absolute;left:230px;top:84px;width:198px;height:45px;background:#4380b8;border-radius:0 0 0 6px;box-shadow:2px 3px 4px rgba(0,0,0,0.3)"></div>
<div class="t" style="left:242.91px;top:95.35px;font-size:14px;line-height:14px;font-weight:400;color:#fff;letter-spacing:0.847px;">Menu Item Information</div>
<div style="position:absolute;left:219px;top:19px;width:79px;height:45px;box-sizing:border-box;border:4px solid #ff0000;border-radius:3px"></div>
<div style="position:absolute;left:220px;top:74px;width:217px;height:65px;box-sizing:border-box;border:4px solid #ff0000;border-radius:3px"></div>
<svg style="position:absolute;left:0;top:0" width="220" height="60"><path d="M205.9 29 H210.4 V50.4 H206 V37.2 L206.1 34.6 L204.3 36.4 L202.2 38.1 L200 35.3 Z" fill="#f00"/></svg>
<div class="t" style="left:197.26px;top:96.05px;font-size:29px;line-height:29px;font-weight:700;color:#ff0000;letter-spacing:0.000px;;transform:scaleX(1.0347);transform-origin:1.74px 0">2</div>
<div style="position:absolute;left:1268px;top:217px;width:565px;height:65.6px;box-sizing:border-box;border:4px solid #ff0000;border-radius:3px"></div>
<div class="t" style="left:1207.52px;top:336.80px;font-size:28px;line-height:28px;font-weight:700;color:#ff0000;letter-spacing:0.000px;;transform:scaleX(1.1257);transform-origin:1.68px 0">3</div>
<div style="position:absolute;left:48px;top:465px;width:1810px;height:434px;box-sizing:border-box;border:4px solid #ff0000;border-radius:3px"></div>
<svg style="position:absolute;left:0;top:0;pointer-events:none" width="1920" height="929"><path d="M406.3 106 L439.2 110 A3.4 3.4 0 0 1 438.5 116.8 L432 117.8 L461.8 148.2 A0.8 0.8 0 0 1 460.8 149 L422.8 127.3 L424.4 134.3 A3 3 0 0 1 418.5 135.6 Z" fill="#f00"/><path d="M1282.8 291.5 L1250.4 299.1 A3.1 3.1 0 0 0 1251.9 305.1 L1258.6 304.4 L1230.4 339 A0.8 0.8 0 0 0 1231.6 340 L1268.3 314.4 L1267.2 322.3 A3.1 3.1 0 0 0 1273.2 323.5 Z" fill="#f00"/><path d="M1215.6 375.4 L1210 420.3 L1205.3 414.3 A3.3 3.3 0 0 0 1199.9 418.4 L1216.5 446.3 L1232.4 418.4 A3.3 3.3 0 0 0 1227.1 414.3 L1223.1 419.9 Z" fill="#f00"/><rect x="1246" y="388.5" width="2" height="2" fill="#f00"/></svg>
</body></html>
